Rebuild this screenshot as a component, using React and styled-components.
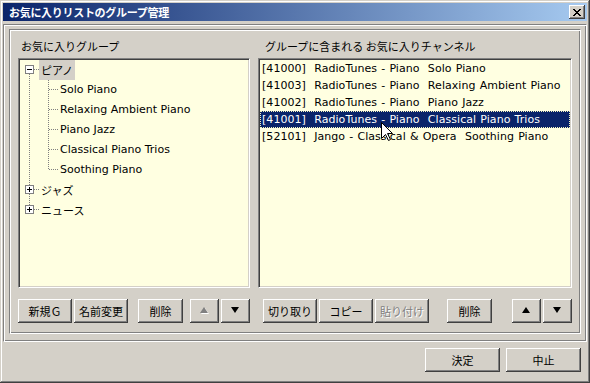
import React from 'react';
import styled, { createGlobalStyle } from 'styled-components';

const JP = '"Noto Sans CJK JP", "DejaVu Sans", sans-serif';
const LAT = '"DejaVu Sans", "Noto Sans CJK JP", sans-serif';

const Global = createGlobalStyle`
  html, body { margin: 0; padding: 0; background: #d4d0c8; }
  body { width: 590px; height: 383px; overflow: hidden; }
`;

const Window = styled.div`
  position: relative;
  width: 590px;
  height: 383px;
  box-sizing: border-box;
  padding: 3px;
  background: #d4d0c8;
  box-shadow: inset -1px -1px #404040, inset 1px 1px #d4d0c8,
    inset -2px -2px #808080, inset 2px 2px #ffffff;
  display: flex;
  flex-direction: column;
  font-family: ${JP};
  color: #000;
`;

const TitleBar = styled.div`
  height: 18px;
  flex-shrink: 0;
  display: flex;
  align-items: center;
  padding-left: 6px;
  background: linear-gradient(to right, #0a246a, #a6caf0);
  color: #fff;
  font-weight: bold;
  font-size: 11px;
  letter-spacing: -0.3px;
`;

const TitleText = styled.span`
  flex: 1;
  line-height: 18px;
`;

const Bevel = `
  background: #d4d0c8;
  box-shadow: inset -1px -1px #404040, inset 1px 1px #ffffff,
    inset -2px -2px #808080, inset 2px 2px #d4d0c8;
`;

const CloseButton = styled.div`
  width: 16px;
  height: 14px;
  margin-right: 2px;
  display: flex;
  align-items: center;
  justify-content: center;
  ${Bevel}
`;

const Etched = `
  box-sizing: border-box;
  border: 1px solid;
  border-color: #808080 #ffffff #ffffff #808080;
  box-shadow: inset 1px 1px #ffffff, inset -1px -1px #808080;
`;

const OuterFrame = styled.div`
  ${Etched}
  margin-top: 3px;
  height: 318px;
  flex-shrink: 0;
  padding: 4px 5px 7px 5px;
  display: flex;
`;

const InnerFrame = styled.div`
  ${Etched}
  flex: 1;
  padding: 8px 8px 10px 8px;
  display: grid;
  grid-template-columns: 232px 314px;
  column-gap: 8px;
`;

const Column = styled.div`
  display: flex;
  flex-direction: column;
`;

const Label = styled.div`
  height: 16px;
  line-height: 16px;
  font-size: 11px;
  padding-left: ${(p) => p.$pl}px;
  white-space: pre;
`;

const ListBox = styled.div`
  margin-top: 4px;
  height: 230px;
  box-sizing: border-box;
  background: #ffffe1;
  border: 1px solid;
  border-color: #808080 #ffffff #ffffff #808080;
  box-shadow: inset 1px 1px #404040, inset -1px -1px #d4d0c8;
  padding: 1px;
  overflow: hidden;
`;

const TreeRow = styled.div`
  display: flex;
  align-items: center;
  height: 20px;
`;

const Gutter = styled.svg`
  display: block;
  flex-shrink: 0;
  shape-rendering: crispEdges;
`;

const NodeLabel = styled.span`
  height: 20px;
  line-height: 20px;
  padding: 0 2px;
  font-size: 11px;
  font-family: ${(p) => (p.$latin ? LAT : JP)};
  background: ${(p) => (p.$selected ? '#d4d0c8' : 'transparent')};
  white-space: pre;
`;

const ChannelRow = styled.div`
  height: 17px;
  box-sizing: border-box;
  line-height: 15px;
  padding-left: 1px;
  border: 1px dotted ${(p) => (p.$selected ? '#f4f4c0' : 'transparent')};
  background: ${(p) => (p.$selected ? '#0a246a' : 'transparent')};
  color: ${(p) => (p.$selected ? '#ffffff' : '#000000')};
  font-family: ${LAT};
  font-size: 11px;
  word-spacing: 0.6px;
  letter-spacing: 0.05px;
  white-space: pre;
`;

const ButtonRow = styled.div`
  display: flex;
  margin-top: 11px;
  height: 24px;
`;

const Button = styled.div`
  width: ${(p) => p.$w}px;
  height: 24px;
  margin-left: ${(p) => p.$ml || 0}px;
  flex-shrink: 0;
  display: flex;
  align-items: center;
  justify-content: center;
  font-family: ${JP};
  font-size: 11px;
  color: ${(p) => (p.$disabled ? '#808080' : '#000000')};
  text-shadow: ${(p) => (p.$disabled ? '1px 1px #ffffff' : 'none')};
  ${Bevel}
`;

const BottomRow = styled.div`
  display: flex;
  justify-content: flex-end;
  gap: 6px;
  margin-top: 6px;
  padding-right: 6px;
`;

const Cursor = styled.svg`
  position: absolute;
  left: 381px;
  top: 122px;
  display: block;
`;

const Dotted = ({ x1, y1, x2, y2 }) => (
  <line
    x1={x1}
    y1={y1}
    x2={x2}
    y2={y2}
    stroke="#808080"
    strokeWidth="1"
    strokeDasharray="1 1"
  />
);

function ExpandBox({ open }) {
  return (
    <g>
      <rect x="5.5" y="5.5" width="8" height="8" fill="#ffffff" stroke="#808080" />
      <line x1="7" y1="9.5" x2="12" y2="9.5" stroke="#000" />
      {!open && <line x1="9.5" y1="7" x2="9.5" y2="12" stroke="#000" />}
    </g>
  );
}

function RootNode({ label, open, position, selected }) {
  return (
    <TreeRow>
      <Gutter width="19" height="20" viewBox="0 0 19 20">
        {position !== 'first' && <Dotted x1="9.5" y1="0" x2="9.5" y2="5" />}
        {position !== 'last' && <Dotted x1="9.5" y1="14" x2="9.5" y2="20" />}
        <Dotted x1="14" y1="9.5" x2="19" y2="9.5" />
        <ExpandBox open={open} />
      </Gutter>
      <NodeLabel $selected={selected}>{label}</NodeLabel>
    </TreeRow>
  );
}

function ChildNode({ label, last }) {
  return (
    <TreeRow>
      <Gutter width="38" height="20" viewBox="0 0 38 20">
        <Dotted x1="9.5" y1="0" x2="9.5" y2="20" />
        <Dotted x1="28.5" y1="0" x2="28.5" y2={last ? 10 : 20} />
        <Dotted x1="29" y1="9.5" x2="38" y2="9.5" />
      </Gutter>
      <NodeLabel $latin>{label}</NodeLabel>
    </TreeRow>
  );
}

function Triangle({ up, disabled }) {
  const pts = up ? '0,6 8,6 4,0' : '0,0 8,0 4,6';
  const pts2 = up ? '1,7 9,7 5,1' : '1,1 9,1 5,7';
  return (
    <svg width="10" height="8" viewBox="0 0 10 8" style={{ display: 'block' }}>
      {disabled && <polygon points={pts2} fill="#ffffff" />}
      <polygon points={pts} fill={disabled ? '#808080' : '#000000'} />
    </svg>
  );
}

const pianoChildren = [
  'Solo Piano',
  'Relaxing Ambient Piano',
  'Piano Jazz',
  'Classical Piano Trios',
  'Soothing Piano',
];

const channels = [
  { id: '41000', text: 'RadioTunes - Piano  Solo Piano' },
  { id: '41003', text: 'RadioTunes - Piano  Relaxing Ambient Piano' },
  { id: '41002', text: 'RadioTunes - Piano  Piano Jazz' },
  { id: '41001', text: 'RadioTunes - Piano  Classical Piano Trios', selected: true },
  { id: '52101', text: 'Jango - Classical & Opera  Soothing Piano' },
];

export default function App() {
  return (
    <>
      <Global />
      <Window>
        <TitleBar>
          <TitleText>お気に入りリストのグループ管理</TitleText>
          <CloseButton>
            <svg width="8" height="7" viewBox="0 0 8 7" style={{ display: 'block' }}>
              <path
                d="M0 0h2v1h1v1h2v-1h1v-1h2v1h-1v1h-1v1h-1v1h1v1h1v1h1v1h-2v-1h-1v-1h-2v1h-1v1h-2v-1h1v-1h1v-1h1v-1h-1v-1h-1v-1h-1z"
                fill="#000"
              />
            </svg>
          </CloseButton>
        </TitleBar>

        <OuterFrame>
          <InnerFrame>
            <Column>
              <Label $pl={3}>お気に入りグループ</Label>
              <ListBox>
                <RootNode label="ピアノ" open position="first" selected />
                {pianoChildren.map((c, i) => (
                  <ChildNode key={c} label={c} last={i === pianoChildren.length - 1} />
                ))}
                <RootNode label="ジャズ" position="middle" />
                <RootNode label="ニュース" position="last" />
              </ListBox>
              <ButtonRow>
                <Button $w={54}>新規Ｇ</Button>
                <Button $w={54} $ml={2}>名前変更</Button>
                <Button $w={45} $ml={10}>削除</Button>
                <Button $w={29} $ml={7}><Triangle up disabled /></Button>
                <Button $w={29} $ml={2}><Triangle /></Button>
              </ButtonRow>
            </Column>

            <Column>
              <Label $pl={7}>グループに含まれる お気に入りチャンネル</Label>
              <ListBox>
                {channels.map((ch) => (
                  <ChannelRow key={ch.id} $selected={ch.selected}>
                    {`[${ch.id}]  ${ch.text}`}
                  </ChannelRow>
                ))}
              </ListBox>
              <ButtonRow>
                <Button $w={54} $ml={5}>切り取り</Button>
                <Button $w={54} $ml={2}>コピー</Button>
                <Button $w={54} $ml={2} $disabled>貼り付け</Button>
                <Button $w={45} $ml={18}>削除</Button>
                <Button $w={29} $ml={20}><Triangle up /></Button>
                <Button $w={29} $ml={2}><Triangle /></Button>
              </ButtonRow>
            </Column>
          </InnerFrame>
        </OuterFrame>

        <BottomRow>
          <Button $w={75}>決定</Button>
          <Button $w={75}>中止</Button>
        </BottomRow>

        <Cursor width="13" height="20" viewBox="0 0 13 20">
          <path
            d="M0.5 0.5 L0.5 16.5 L4.5 12.5 L7.5 18.5 L9.5 17.5 L6.5 11.5 L11.5 11.5 Z"
            fill="#ffffff"
            stroke="#000000"
            strokeWidth="1"
            strokeLinejoin="miter"
          />
        </Cursor>
      </Window>
    </>
  );
}
